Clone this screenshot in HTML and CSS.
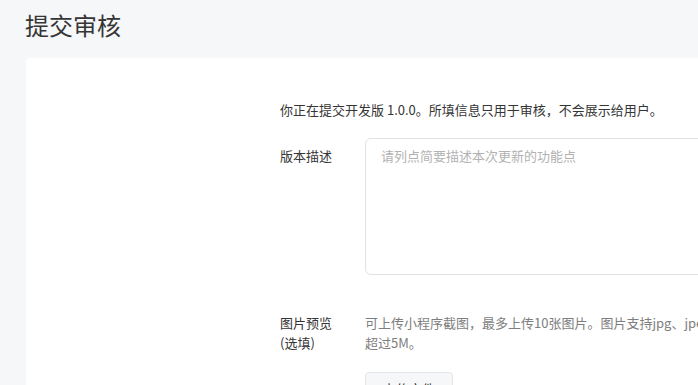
FILE: index.html
```html
<!DOCTYPE html>
<html lang="zh-CN">
<head>
    <meta charset="UTF-8">
    <title>提交审核</title>
    <link rel="stylesheet" href="styles.css">
</head>
<body>
    <h1 class="page-title">提交审核</h1>

    <div class="card">
        <p class="intro">你正在提交开发版 1.0.0。所填信息只用于审核，不会展示给用户。</p>

        <div class="form-row">
            <label class="form-label" for="desc">版本描述</label>
            <textarea id="desc" class="form-textarea" placeholder="请列点简要描述本次更新的功能点"></textarea>
        </div>

        <div class="form-row form-row-pics">
            <div class="form-label">图片预览<br>(选填)</div>
            <div class="form-field">
                <p class="form-tip">可上传小程序截图，最多上传10张图片。图片支持jpg、jpeg、png、bmp、gif格式，大小不<br>超过5M。</p>
                <button class="upload-btn">上传文件</button>
            </div>
        </div>
    </div>
</body>
</html>
```

FILE: styles.css
```css
* {
    box-sizing: border-box;
    margin: 0;
    padding: 0;
}

body {
    font-family: "Noto Sans CJK SC", "Liberation Sans", sans-serif;
    background: #f6f7f9;
    color: #353535;
    font-size: 13px;
    line-height: 20px;
    overflow: hidden;
}

.page-title {
    font-size: 24px;
    font-weight: normal;
    line-height: 36px;
    padding: 7px 25px 0;
    color: #353535;
}

.card {
    background: #fff;
    border-radius: 4px;
    margin: 15px 0 0 26px;
    width: 900px;
    min-height: 400px;
    padding: 42px 0 0 254px;
}

.intro {
    margin-bottom: 18px;
}

.form-row {
    display: flex;
}

.form-label {
    width: 85px;
    flex-shrink: 0;
    padding-top: 8px;
}

.form-textarea {
    width: 560px;
    height: 137px;
    border: 1px solid #e2e2e2;
    border-radius: 6px;
    padding: 7px 15px;
    font-family: inherit;
    font-size: 13px;
    line-height: 20px;
    color: #353535;
    resize: none;
    outline: none;
}

.form-textarea::placeholder {
    color: #b2b2b2;
}

.form-row-pics {
    margin-top: 38px;
}

.form-row-pics .form-label {
    padding-top: 0;
}

.form-tip {
    color: #7e7e7e;
    width: 600px;
}

.upload-btn {
    margin-top: 19px;
    width: 88px;
    height: 32px;
    border: 1px solid #e4e6eb;
    border-radius: 4px;
    background: #f6f7f9;
    font-family: inherit;
    font-size: 13px;
    color: #353535;
}
```
